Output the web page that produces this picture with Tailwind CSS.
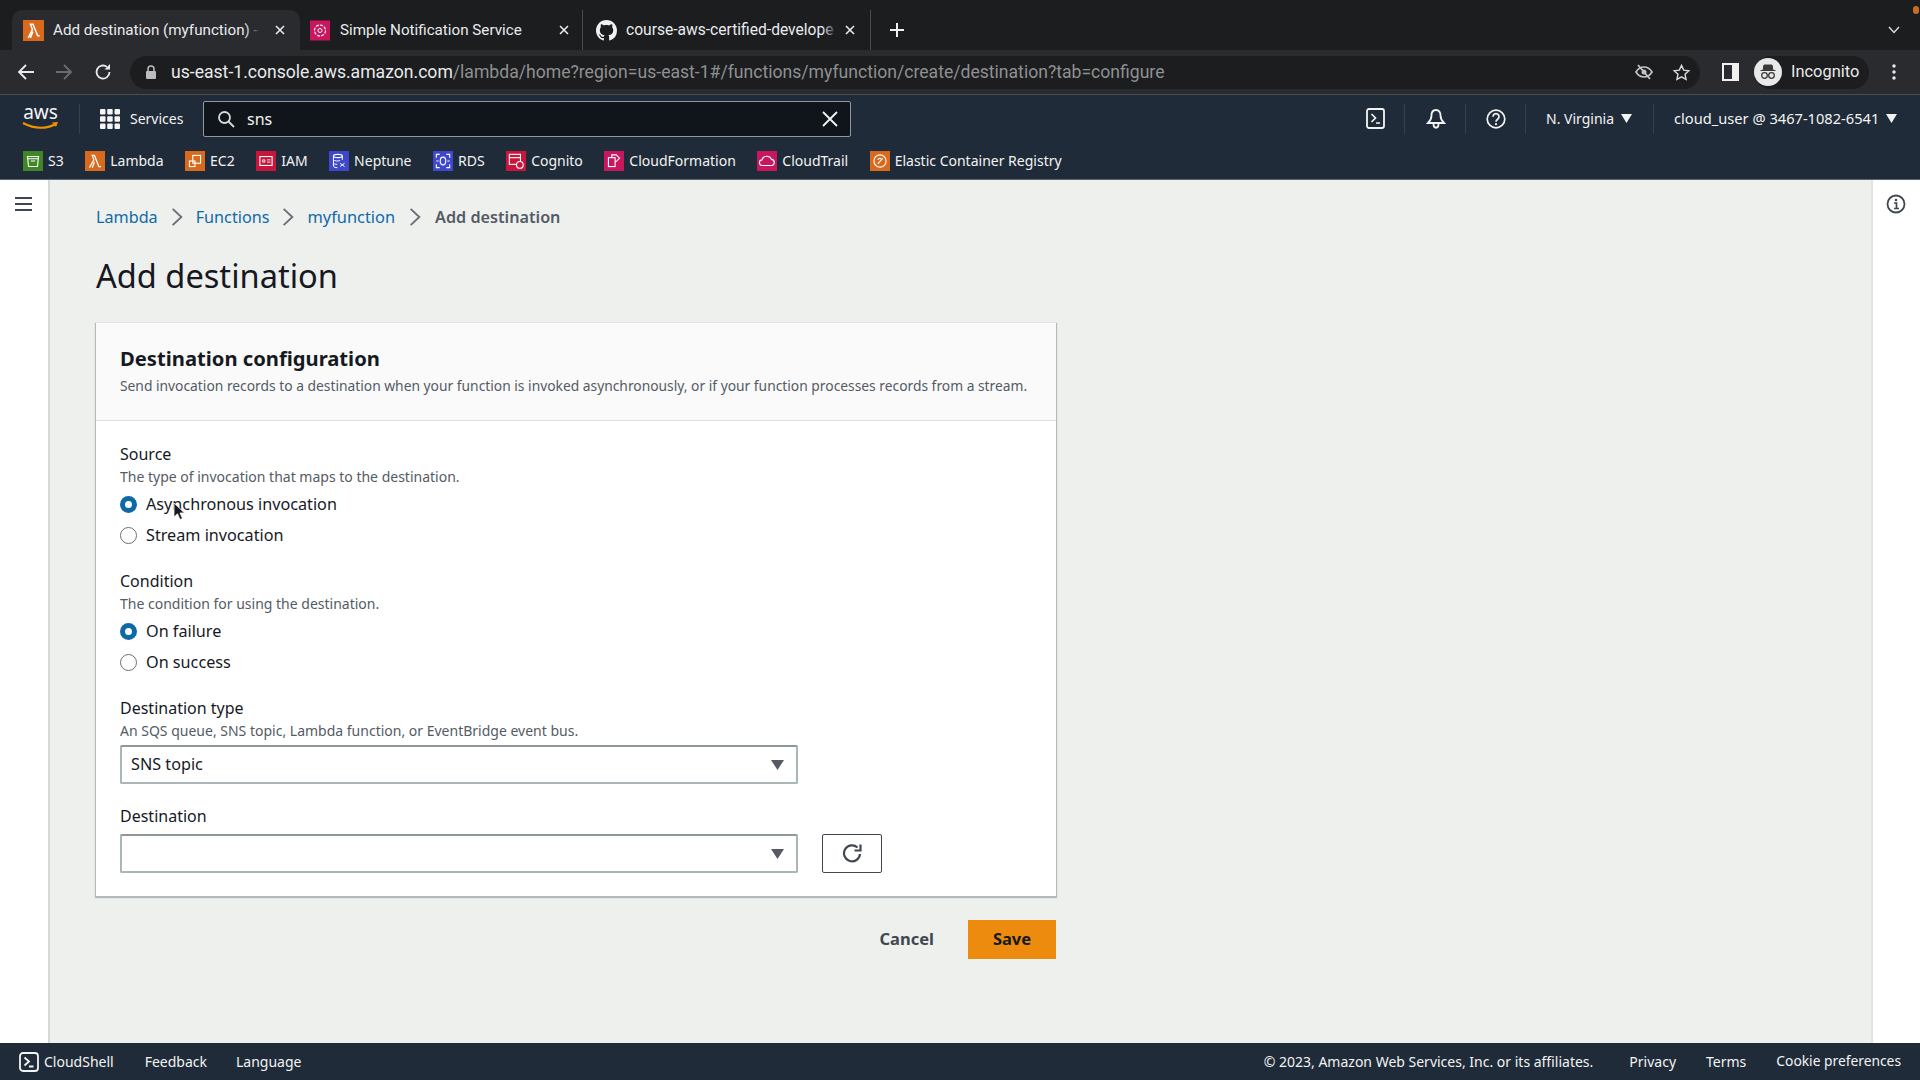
<!DOCTYPE html>
<html lang="en">
<head>
    <meta charset="UTF-8">
    <title>Add destination (myfunction)</title>
    <script src="https://cdn.jsdelivr.net/npm/@tailwindcss/browser@4"></script>
</head>
<body class="font-['Noto_Sans',sans-serif]">
<div class="relative w-[1920px] h-[1080px] overflow-hidden flex flex-col bg-[#eef0ee]">

    <!-- browser tabs -->
    <div class="relative h-[50px] shrink-0 bg-[#1c1d1f] flex items-end pl-[12px] text-[15.2px] text-[#e8eaed] font-['Roboto',sans-serif]">
        <div class="w-[288px] h-[40px] bg-[#2a2b2e] rounded-t-[10px] flex items-center pl-[11px] pr-[14px]">
            <svg class="w-[21px] h-[21px] shrink-0" viewBox="0 0 20 20"><rect width="20" height="20" fill="#d9691c"/><path d="M5 17 9 9 7 4h2.5l4.500 11h2M9.500 11 7 17" fill="none" stroke="#fff" stroke-width="1.400"/></svg>
            <div class="relative ml-[9px] w-[208px] overflow-hidden whitespace-nowrap">
                Add destination (myfunction) -
                <div class="absolute right-0 top-0 w-[16px] h-full bg-linear-to-r from-transparent to-[#2a2b2e]"></div>
            </div>
            <svg class="ml-auto w-[12px] h-[12px]" viewBox="0 0 12 12"><path d="M2 2 10 10M10 2 2 10" stroke="#e8eaed" stroke-width="1.600"/></svg>
        </div>
        <div class="w-[283px] h-[40px] flex items-center pl-[10px] pr-[12px] border-r border-[#4a4b4e]">
            <svg class="w-[20px] h-[21px] shrink-0" viewBox="0 0 20 20"><rect width="20" height="20" fill="#c9175f"/><circle cx="10" cy="10" r="5.500" fill="none" stroke="#fff" stroke-width="1.100" stroke-dasharray="3 1.200"/><circle cx="10" cy="10" r="2" fill="none" stroke="#fff"/></svg>
            <span class="ml-[10px] whitespace-nowrap">Simple Notification Service</span>
            <svg class="ml-auto w-[12px] h-[12px]" viewBox="0 0 12 12"><path d="M2 2 10 10M10 2 2 10" stroke="#e8eaed" stroke-width="1.600"/></svg>
        </div>
        <div class="w-[288px] h-[40px] flex items-center pl-[13px] pr-[14px] border-r border-[#4a4b4e]">
            <svg class="w-[21px] h-[21px] shrink-0" viewBox="0 0 16 16"><path fill="#f1f1f1" d="M8 0C3.58 0 0 3.58 0 8c0 3.54 2.29 6.53 5.47 7.59.4.07.55-.17.55-.38 0-.19-.01-.82-.01-1.49-2.01.37-2.53-.49-2.69-.94-.09-.23-.48-.94-.82-1.13-.28-.15-.68-.52-.01-.53.63-.01 1.08.58 1.23.82.72 1.21 1.87.87 2.33.66.07-.52.28-.87.51-1.07-1.78-.2-3.64-.89-3.64-3.95 0-.87.31-1.59.82-2.15-.08-.2-.36-1.02.08-2.12 0 0 .67-.21 2.2.82.64-.18 1.32-.27 2-.27s1.36.09 2 .27c1.53-1.04 2.2-.82 2.2-.82.44 1.1.16 1.92.08 2.12.51.56.82 1.27.82 2.15 0 3.07-1.87 3.75-3.65 3.95.29.25.54.73.54 1.48 0 1.07-.01 1.93-.01 2.2 0 .21.15.46.55.38A8.01 8.01 0 0 0 16 8c0-4.42-3.58-8-8-8z"/></svg>
            <div class="relative ml-[9px] w-[212px] pt-[1px] whitespace-nowrap text-[15.6px]">
                course-aws-certified-develope
                <div class="absolute right-0 top-0 w-[16px] h-full bg-linear-to-r from-transparent to-[#1c1d1f]"></div>
            </div>
            <svg class="ml-auto w-[12px] h-[12px]" viewBox="0 0 12 12"><path d="M2 2 10 10M10 2 2 10" stroke="#e8eaed" stroke-width="1.600"/></svg>
        </div>
        <div class="h-[40px] flex items-center pl-[18px]">
            <svg class="w-[16px] h-[16px]" viewBox="0 0 16 16"><path d="M8 1V15M1 8H15" stroke="#f1f1f1" stroke-width="2"/></svg>
        </div>
        <svg class="absolute right-[20px] top-[26px] w-[12px] h-[8px]" viewBox="0 0 12 8"><path d="M1 1 6 6.500 11 1" fill="none" stroke="#d8d8d8" stroke-width="1.500"/></svg>
        <div class="absolute right-[1px] top-[6px] w-[6px] h-[8px] rounded-full bg-[#c8701f]"></div>
    </div>

    <!-- browser toolbar -->
    <div class="h-[45px] shrink-0 bg-[#2a2b2e] border-b border-[#4b4c4e] flex items-center text-[17.6px] font-['Roboto',sans-serif]">
        <svg class="ml-[17px] w-[18px] h-[18px]" viewBox="0 0 18 18"><path d="M17 9H2M9 2 2 9l7 7" fill="none" stroke="#e8eaed" stroke-width="1.800"/></svg>
        <svg class="ml-[20px] w-[18px] h-[18px]" viewBox="0 0 18 18"><path d="M1 9H16M9 2l7 7-7 7" fill="none" stroke="#6b6c6e" stroke-width="1.800"/></svg>
        <svg class="ml-[21px] w-[18px] h-[18px]" viewBox="0 0 18 18"><path d="M15.500 9A6.500 6.500 0 1 1 13 3.900" fill="none" stroke="#e8eaed" stroke-width="1.800"/><path d="M16 1v5.500h-5.500z" fill="#e8eaed"/></svg>
        <div class="ml-[18px] w-[1570px] h-[33px] bg-[#1c1d1f] rounded-full flex items-center pl-[15px] pr-[6px] shrink-0">
            <svg class="w-[12px] h-[14px] shrink-0" viewBox="0 0 12 14"><path d="M3 6V4a3 3 0 0 1 6 0v2" fill="none" stroke="#bdbdbd" stroke-width="1.500"/><rect x="1" y="6" width="10" height="8" rx="1" fill="#bdbdbd"/></svg>
            <span class="ml-[14px] pt-[1px] whitespace-nowrap text-[#e8eaed]">us-east-1.console.aws.amazon.com<span class="text-[#8f9092]">/lambda/home?region=us-east-1#/functions/myfunction/create/destination?tab=configure</span></span>
            <svg class="ml-auto w-[20px] h-[20px]" viewBox="0 0 20 20"><path d="M2 10s3-5 8-5 8 5 8 5-3 5-8 5-8-5-8-5z" fill="none" stroke="#c4c4c4" stroke-width="1.700"/><circle cx="10" cy="10" r="2.500" fill="#c4c4c4"/><path d="M4 3 16 17" stroke="#c4c4c4" stroke-width="1.800"/></svg>
            <svg class="ml-[18px] mr-[3px] w-[19px] h-[19px]" viewBox="0 0 20 20"><path d="M10 2.500l2.300 5 5.400.6-4 3.700 1.100 5.400L10 14.500l-4.800 2.700 1.100-5.400-4-3.700 5.400-.6z" fill="none" stroke="#d8d8d8" stroke-width="1.500"/></svg>
        </div>
        <svg class="ml-[22px] w-[17px] h-[18px] shrink-0" viewBox="0 0 17 18"><rect x="1" y="1" width="15" height="16" fill="none" stroke="#f0f0f0" stroke-width="2"/><rect x="10" y="1" width="6" height="16" fill="#f0f0f0"/></svg>
        <div class="ml-[15px] w-[115px] h-[33px] bg-[#1c1d1f] rounded-full flex items-center shrink-0 text-[16.4px] text-[#e8eaed]">
            <div class="w-[28px] h-[28px] rounded-full bg-[#e9e9e9] flex items-center justify-center shrink-0">
                <svg class="w-[22px] h-[22px]" viewBox="0 0 22 22"><path d="M7 4h8l1 5H6zM3.500 9.500h15" fill="#3a3a3a" stroke="#3a3a3a"/><circle cx="7.500" cy="14.500" r="2.800" fill="none" stroke="#3a3a3a" stroke-width="1.300"/><circle cx="14.500" cy="14.500" r="2.800" fill="none" stroke="#3a3a3a" stroke-width="1.300"/></svg>
            </div>
            <span class="ml-[9px]">Incognito</span>
        </div>
        <svg class="ml-[23px] w-[4px] h-[16px] shrink-0" viewBox="0 0 4 16"><circle cx="2" cy="2" r="1.700" fill="#e8eaed"/><circle cx="2" cy="8" r="1.700" fill="#e8eaed"/><circle cx="2" cy="14" r="1.700" fill="#e8eaed"/></svg>
    </div>

    <!-- console nav -->
    <div class="h-[85px] shrink-0 bg-[#202b39] border-b border-[#5b6570] text-[#f2f3f3] text-[14px]">
        <div class="h-[47px] flex items-center">
            <div class="ml-[21px] w-[39px] shrink-0 flex flex-col items-center">
                <span class="h-[17px] leading-[15px] text-[19px] text-[#f5f5f5]">aws</span>
                <svg class="w-[39px] h-[10px]" viewBox="0 0 39 10"><path d="M2 1q17 9 33 1" fill="none" stroke="#f29100" stroke-width="2"/><path d="M31 .5l6-.5-2 5z" fill="#f29100"/></svg>
            </div>
            <div class="ml-[19px] w-px h-[30px] bg-[#33404e]"></div>
            <svg class="ml-[20px] w-[20px] h-[20px] shrink-0" viewBox="0 0 20 20" fill="#f5f5f5"><rect width="5.500" height="5.500" rx="1"/><rect x="7.200" width="5.500" height="5.500" rx="1"/><rect x="14.500" width="5.500" height="5.500" rx="1"/><rect y="7.200" width="5.500" height="5.500" rx="1"/><rect x="7.200" y="7.200" width="5.500" height="5.500" rx="1"/><rect x="14.500" y="7.200" width="5.500" height="5.500" rx="1"/><rect y="14.500" width="5.500" height="5.500" rx="1"/><rect x="7.200" y="14.500" width="5.500" height="5.500" rx="1"/><rect x="14.500" y="14.500" width="5.500" height="5.500" rx="1"/></svg>
            <span class="ml-[10px] w-[53px] whitespace-nowrap">Services</span>
            <div class="ml-[20px] w-[648px] h-[36px] bg-[#10151b] border border-[#8d98a3] rounded-[2px] flex items-center pl-[13px] pr-[12px] shrink-0">
                <svg class="w-[18px] h-[18px] shrink-0" viewBox="0 0 18 18"><circle cx="7.500" cy="7.500" r="5.500" fill="none" stroke="#d5dbdb" stroke-width="1.800"/><path d="M11.500 11.500 17 17" stroke="#d5dbdb" stroke-width="1.800"/></svg>
                <span class="ml-[12px] text-[16px]">sns</span>
                <svg class="ml-auto w-[16px] h-[16px]" viewBox="0 0 16 16"><path d="M1 1 15 15M15 1 1 15" stroke="#f2f3f3" stroke-width="1.800"/></svg>
            </div>
            <svg class="ml-[515px] w-[19px] h-[21px] shrink-0" viewBox="0 0 19 21"><rect x="1" y="1" width="17" height="19" rx="2" fill="none" stroke="#f2f3f3" stroke-width="1.800"/><path d="M5.500 6l4 4-4 4M10 15h4" fill="none" stroke="#f2f3f3" stroke-width="1.700"/></svg>
            <div class="ml-[19px] w-px h-[30px] bg-[#33404e]"></div>
            <svg class="ml-[21px] w-[20px] h-[22px] shrink-0" viewBox="0 0 20 22"><path d="M10 2c-3 0-4.500 2.500-4.500 5.500 0 3-1.500 5.500-3.500 7.500h16c-2-2-3.500-4.500-3.500-7.500C14.500 4.500 13 2 10 2z" fill="none" stroke="#f2f3f3" stroke-width="1.800"/><path d="M7.500 16c0 5 5 5 5 0" fill="none" stroke="#f2f3f3" stroke-width="1.800"/></svg>
            <div class="ml-[19px] w-px h-[30px] bg-[#33404e]"></div>
            <svg class="ml-[20px] w-[20px] h-[20px] shrink-0" viewBox="0 0 20 20"><circle cx="10" cy="10" r="8.800" fill="none" stroke="#f2f3f3" stroke-width="1.700"/><path d="M7 7.700a3 3 0 1 1 4.600 2.500c-1 .7-1.600 1.200-1.600 2.500" fill="none" stroke="#f2f3f3" stroke-width="1.700"/><circle cx="10" cy="15.200" r="1.100" fill="#f2f3f3"/></svg>
            <div class="ml-[19px] w-px h-[30px] bg-[#33404e]"></div>
            <span class="ml-[20px] whitespace-nowrap">N. Virginia</span>
            <svg class="ml-[7px] w-[11px] h-[9px] shrink-0" viewBox="0 0 11 9"><path d="M0 0H11L5.500 9z" fill="#f2f3f3"/></svg>
            <div class="ml-[21px] w-px h-[30px] bg-[#33404e]"></div>
            <span class="ml-[20px] whitespace-nowrap text-[14.65px]">cloud_user @ 3467-1082-6541</span>
            <svg class="ml-[7px] w-[11px] h-[9px] shrink-0" viewBox="0 0 11 9"><path d="M0 0H11L5.500 9z" fill="#f2f3f3"/></svg>
        </div>
        <div class="h-[37px] flex items-center pl-[23px] gap-[21.5px]">
            <div class="flex items-center gap-[5px]"><svg class="w-[20px] h-[20px]" viewBox="0 0 18 18"><rect width="18" height="18" fill="#3f8624"/><path d="M4 5h10l-1 9H5zM4 7h10M7 9h4" fill="none" stroke="#fff" stroke-width="1"/></svg><span>S3</span></div>
            <div class="flex items-center gap-[5px]"><svg class="w-[20px] h-[20px]" viewBox="0 0 18 18"><rect width="18" height="18" fill="#d9691c"/><path d="M4 15 8 8 6.500 4h2l4 10h2M8.500 10 6.500 15" fill="none" stroke="#fff" stroke-width="1.100"/></svg><span>Lambda</span></div>
            <div class="flex items-center gap-[5px]"><svg class="w-[20px] h-[20px]" viewBox="0 0 18 18"><rect width="18" height="18" fill="#d9691c"/><rect x="7" y="4" width="7" height="7" fill="none" stroke="#fff"/><rect x="4" y="9" width="5" height="5" fill="none" stroke="#fff"/></svg><span>EC2</span></div>
            <div class="flex items-center gap-[5px]"><svg class="w-[20px] h-[20px]" viewBox="0 0 18 18"><rect width="18" height="18" fill="#c7153c"/><rect x="3.500" y="5" width="11" height="8" fill="none" stroke="#fff"/><path d="M6 8h2v2H6zM10 8h3M10 10h3" fill="none" stroke="#fff" stroke-width=".8"/></svg><span>IAM</span></div>
            <div class="flex items-center gap-[5px]"><svg class="w-[20px] h-[20px]" viewBox="0 0 18 18"><rect width="18" height="18" fill="#3f48cc"/><ellipse cx="8" cy="4.500" rx="4" ry="1.500" fill="none" stroke="#fff"/><path d="M4 4.500v9c0 1 2 1.500 3.500 1.500M12 4.500V8M4 8c1 1 4 1.500 6 .5M4 11c1 1 2 1 3.500 1M10 11l4 3M14 11l-4 3" fill="none" stroke="#fff" stroke-width=".9"/></svg><span>Neptune</span></div>
            <div class="flex items-center gap-[5px]"><svg class="w-[20px] h-[20px]" viewBox="0 0 18 18"><rect width="18" height="18" fill="#3f48cc"/><ellipse cx="9" cy="9" rx="2.500" ry="3.500" fill="none" stroke="#fff"/><path d="M3 6V3h3M15 6V3h-3M3 12v3h3M15 12v3h-3M5 9H3M15 9h-2" fill="none" stroke="#fff"/></svg><span>RDS</span></div>
            <div class="flex items-center gap-[5px]"><svg class="w-[20px] h-[20px]" viewBox="0 0 18 18"><rect width="18" height="18" fill="#c7153c"/><rect x="3" y="3" width="10" height="9" fill="none" stroke="#fff"/><path d="M3 6h10" stroke="#fff"/><circle cx="12.500" cy="12.500" r="3" fill="#c7153c" stroke="#fff"/></svg><span>Cognito</span></div>
            <div class="flex items-center gap-[5px]"><svg class="w-[20px] h-[20px]" viewBox="0 0 18 18"><rect width="18" height="18" fill="#c9175f"/><rect x="4" y="6" width="6" height="8" fill="none" stroke="#fff"/><path d="M7 6V3.500h4l3 3-3 3h-1" fill="none" stroke="#fff"/></svg><span>CloudFormation</span></div>
            <div class="flex items-center gap-[5px]"><svg class="w-[20px] h-[20px]" viewBox="0 0 18 18"><rect width="18" height="18" fill="#c9175f"/><path d="M5 13a2.500 2.500 0 0 1-.5-5A4.500 4.500 0 0 1 13 7.500 2.800 2.800 0 0 1 13.500 13z" fill="none" stroke="#fff"/></svg><span>CloudTrail</span></div>
            <div class="flex items-center gap-[5px]"><svg class="w-[20px] h-[20px]" viewBox="0 0 18 18"><rect width="18" height="18" fill="#d9691c"/><circle cx="9" cy="9" r="5.500" fill="none" stroke="#fff"/><path d="M7 11.500 11.500 6.500M7 8a2 2 0 0 1 3-1" fill="none" stroke="#fff"/></svg><span>Elastic Container Registry</span></div>
        </div>
    </div>

    <!-- page -->
    <div class="flex-1 flex min-h-0">
        <div class="w-[50px] shrink-0 bg-white border-r-2 border-[#d5d8d8] pt-[16px] pl-[15px]">
            <svg class="w-[17px] h-[16px]" viewBox="0 0 17 16"><path d="M0 2H17M0 8H17M0 14H17" stroke="#414750" stroke-width="2"/></svg>
        </div>
        <main class="flex-1 pl-[46px] pt-[25px]">
            <nav class="h-[24px] flex items-center text-[16.2px] text-[#0e6aa6]">
                <span>Lambda</span>
                <svg class="mx-[13px] w-[12px] h-[20px]" viewBox="0 0 11 18"><path d="M1.500 1.500 9.500 9l-8 7.500" fill="none" stroke="#687078" stroke-width="1.700"/></svg>
                <span>Functions</span>
                <svg class="mx-[13px] w-[12px] h-[20px]" viewBox="0 0 11 18"><path d="M1.500 1.500 9.500 9l-8 7.500" fill="none" stroke="#687078" stroke-width="1.700"/></svg>
                <span class="text-[16.4px]">myfunction</span>
                <svg class="ml-[14px] mr-[14px] w-[12px] h-[20px]" viewBox="0 0 11 18"><path d="M1.500 1.500 9.500 9l-8 7.500" fill="none" stroke="#687078" stroke-width="1.700"/></svg>
                <span class="font-semibold text-[#545b64]">Add destination</span>
            </nav>
            <h1 class="mt-[25px] h-[44px] leading-[44px] text-[32.6px] text-[#16191f]">Add destination</h1>
            <section class="mt-[25px] w-[960px] bg-white shadow-[0_1px_1px_1px_rgba(0,28,36,0.25)]">
                <header class="h-[98px] bg-[#fafafa] border-b border-[#dfe1e1] pl-[24px] pt-[21px]">
                    <h2 class="h-[28px] leading-[28px] text-[20.2px] font-bold text-[#16191f]">Destination configuration</h2>
                    <p class="mt-[4px] leading-[20px] text-[13.82px] text-[#545b64] whitespace-nowrap">Send invocation records to a destination when your function is invoked asynchronously, or if your function processes records from a stream.</p>
                </header>
                <div class="pl-[24px] pt-[22px] pb-[23px] text-[#16191f]">
                    <p class="h-[22px] leading-[22px] text-[16px]">Source</p>
                    <p class="h-[20px] leading-[20px] text-[14px] text-[#545b64] mt-[2px]">The type of invocation that maps to the destination.</p>
                    <div class="mt-[5px] h-[24px] flex items-center gap-[9px] text-[16.2px]">
                        <span class="w-[17px] h-[17px] rounded-full border-[5px] border-[#0e6aa6] bg-white"></span><span>Asynchronous invocation</span>
                    </div>
                    <div class="mt-[7px] h-[24px] flex items-center gap-[9px] text-[16.2px]">
                        <span class="w-[17px] h-[17px] rounded-full border border-[#687078] bg-white"></span><span>Stream invocation</span>
                    </div>

                    <p class="mt-[23px] h-[22px] leading-[22px] text-[16px]">Condition</p>
                    <p class="h-[20px] leading-[20px] text-[14px] text-[#545b64] mt-[2px]">The condition for using the destination.</p>
                    <div class="mt-[5px] h-[24px] flex items-center gap-[9px] text-[16.2px]">
                        <span class="w-[17px] h-[17px] rounded-full border-[5px] border-[#0e6aa6] bg-white"></span><span>On failure</span>
                    </div>
                    <div class="mt-[7px] h-[24px] flex items-center gap-[9px] text-[16.2px]">
                        <span class="w-[17px] h-[17px] rounded-full border border-[#687078] bg-white"></span><span>On success</span>
                    </div>

                    <p class="mt-[23px] h-[22px] leading-[22px] text-[16px]">Destination type</p>
                    <p class="h-[20px] leading-[20px] text-[14px] text-[#545b64] mt-[2px]">An SQS queue, SNS topic, Lambda function, or EventBridge event bus.</p>
                    <div class="mt-[4px] w-[678px] h-[39px] border-2 border-[#aab7b8] border-t-[#8f9797] rounded-[2px] flex items-center pl-[9px] pr-[12px] text-[16.2px]">
                        <span>SNS topic</span>
                        <svg class="ml-auto w-[13px] h-[10px]" viewBox="0 0 13 10"><path d="M0 0H13L6.500 10z" fill="#545b64"/></svg>
                    </div>

                    <p class="mt-[21px] h-[22px] leading-[22px] text-[16px]">Destination</p>
                    <div class="mt-[7px] flex items-center gap-[24px]">
                        <div class="w-[678px] h-[39px] border-2 border-[#aab7b8] border-t-[#8f9797] rounded-[2px] flex items-center pl-[9px] pr-[12px]">
                            <svg class="ml-auto w-[13px] h-[10px]" viewBox="0 0 13 10"><path d="M0 0H13L6.500 10z" fill="#545b64"/></svg>
                        </div>
                        <div class="w-[60px] h-[39px] border border-[#414750] rounded-[2px] flex items-center justify-center">
                            <svg class="w-[21px] h-[21px]" viewBox="0 0 21 21"><path d="M18 11a8 8 0 1 1-2.500-6.500" fill="none" stroke="#414750" stroke-width="2.200"/><path d="M18.500 1.500v6h-6" fill="none" stroke="#414750" stroke-width="2.200"/></svg>
                        </div>
                    </div>
                </div>
            </section>
            <div class="mt-[24px] w-[960px] flex items-center justify-end">
                <span class="font-bold text-[16.5px] text-[#414750]">Cancel</span>
                <div class="ml-[34px] w-[88px] h-[39px] bg-[#ec8b0e] flex items-center justify-center font-bold text-[16.5px] text-[#16191f]">Save</div>
            </div>
        </main>
        <div class="w-[49px] shrink-0 bg-white border-l-2 border-[#e2e4e4] pt-[14px] pl-[13px]">
            <svg class="w-[20px] h-[20px]" viewBox="0 0 20 20"><circle cx="10" cy="10" r="8.500" fill="none" stroke="#414750" stroke-width="1.800"/><circle cx="10" cy="6" r="1.300" fill="#414750"/><path d="M8 9h2.500v5M8 14.500h5" fill="none" stroke="#414750" stroke-width="1.700"/></svg>
        </div>
    </div>

    <!-- console footer -->
    <div class="h-[37px] shrink-0 bg-[#202b39] flex items-center pl-[19px] text-[14px] text-[#f2f3f3]">
        <svg class="w-[20px] h-[20px]" viewBox="0 0 20 20"><rect x="1" y="1" width="18" height="18" rx="3" fill="none" stroke="#f2f3f3" stroke-width="1.800"/><path d="M5.500 5.500l4.500 4-4.500 4M10 14.500h4.500" fill="none" stroke="#f2f3f3" stroke-width="1.800"/></svg>
        <span class="ml-[5px]">CloudShell</span>
        <span class="ml-[31px]">Feedback</span>
        <span class="ml-[29px]">Language</span>
        <span class="ml-auto">© 2023, Amazon Web Services, Inc. or its affiliates.</span>
        <span class="ml-[36px]">Privacy</span>
        <span class="ml-[30px]">Terms</span>
        <span class="ml-[30px] mr-[19px] text-[13.8px]">Cookie preferences</span>
    </div>

    <!-- mouse pointer -->
    <svg class="absolute left-[173px] top-[502px] w-[12px] h-[19px]" viewBox="0 0 12 19"><path d="M1 1V15L4.500 11.800 7 17.500 9.500 16.500 7 11H11.500z" fill="#16191f" stroke="#fff" stroke-width=".8"/></svg>
</div>
</body>
</html>
